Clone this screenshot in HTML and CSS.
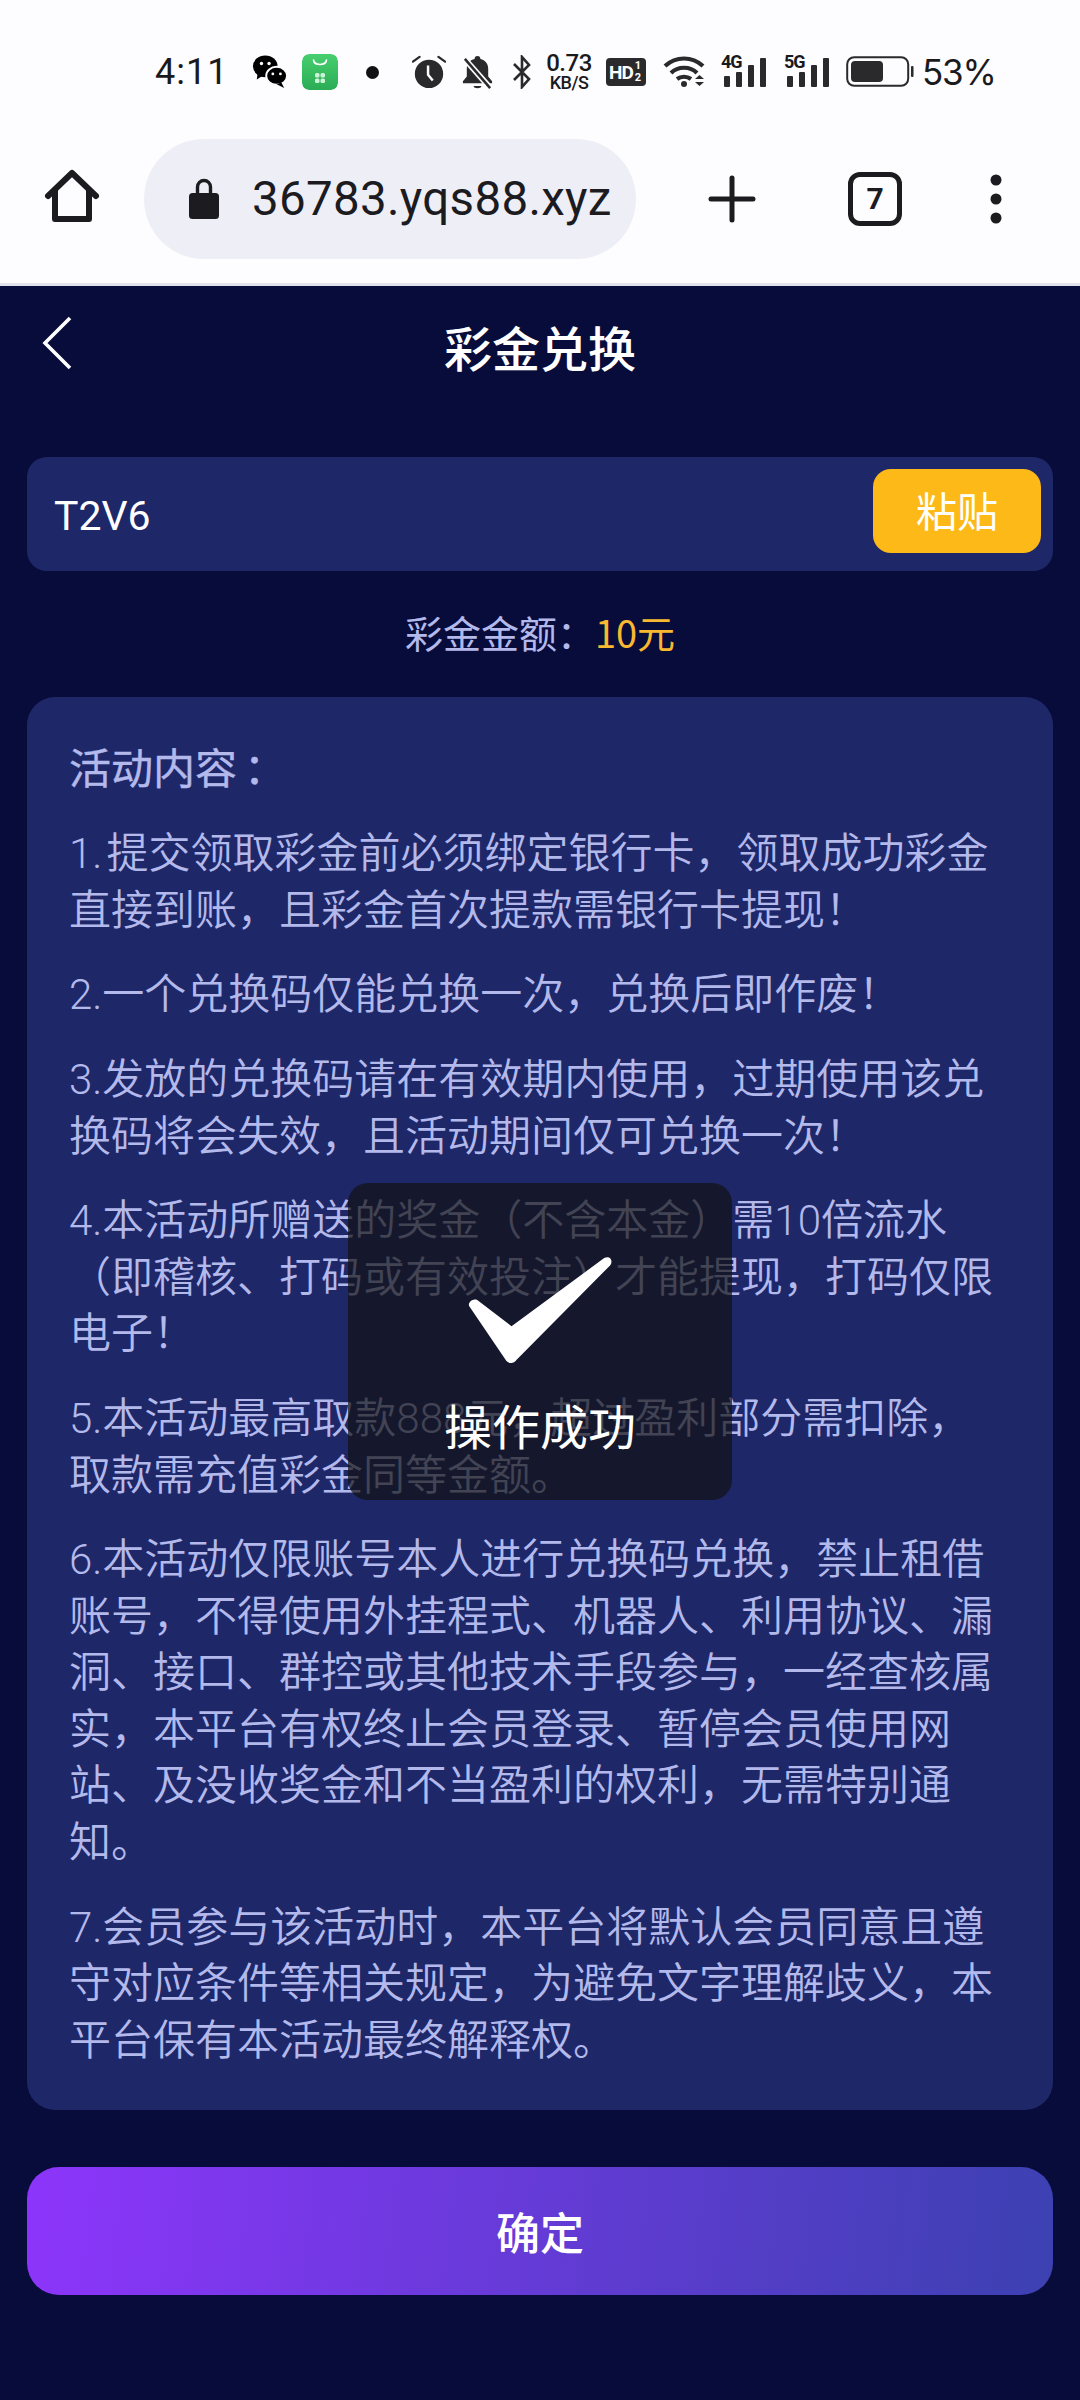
FILE: index.html
```html
<!DOCTYPE html>
<html lang="zh">
<head>
<meta charset="utf-8">
<title>彩金兑换</title>
<link rel="stylesheet" href="styles.css">
</head>
<body>
<div class="phone">
  <div class="status">
    <span class="time">4:11</span>
    <svg class="i-wechat" viewBox="0 0 38 38"><ellipse cx="14" cy="13" rx="13" ry="11.500"/><path d="M6 20l-1 7 8-5z"/><ellipse cx="26" cy="23" rx="11" ry="9.500" stroke="#fdfcff" stroke-width="2"/><path d="M31 30l3 6-8-4z"/><circle cx="10" cy="10" r="1.800" fill="#fdfcff"/><circle cx="18" cy="10" r="1.800" fill="#fdfcff"/><circle cx="22" cy="21" r="1.500" fill="#fdfcff"/><circle cx="30" cy="21" r="1.500" fill="#fdfcff"/></svg>
    <svg class="i-store" viewBox="0 0 36 36"><defs><linearGradient id="g" x1="0" y1="0" x2="0" y2="1"><stop offset="0" stop-color="#47cf6f"/><stop offset="1" stop-color="#2bac55"/></linearGradient></defs><rect width="36" height="36" rx="7" fill="url(#g)"/><path d="M11.500 6c1 6 12 6 13 0" fill="none" stroke="#fff" stroke-width="1.600" stroke-linecap="round"/><g fill="#cdf3d9"><rect x="13" y="19" width="4.500" height="4.500" rx="1.500"/><rect x="18.500" y="19" width="4.500" height="4.500" rx="1.500"/><rect x="13" y="24.500" width="4.500" height="4.500" rx="1.500"/><rect x="18.500" y="24.500" width="4.500" height="4.500" rx="1.500"/></g></svg>
    <span class="dot"></span>
    <svg class="i-alarm" viewBox="0 0 36 36"><circle cx="18" cy="20" r="15" fill="#2a2a2c"/><path d="M1 7l7-5M35 7l-7-5" stroke="#2a2a2c" stroke-width="2.400" stroke-linecap="round"/><path d="M17 11v10l5 6" fill="none" stroke="#fff" stroke-width="2.600"/></svg>
    <svg class="i-bell" viewBox="0 0 32 36"><path d="M16 1c2 0 3 1 3 3 5 1 8 5 8 10v8l4 5v2H1v-2l4-5v-8c0-5 3-9 8-10 0-2 1-3 3-3z" fill="#2a2a2c"/><path d="M12 32h8c0 3-8 3-8 0z" fill="#2a2a2c"/><path d="M1 2l29 33" stroke="#fdfcff" stroke-width="6"/><path d="M3 4l26 30" stroke="#2a2a2c" stroke-width="2.600"/></svg>
    <svg class="i-bt" viewBox="0 0 20 34"><path d="M2 9l15 15-7 8V2l7 8L2 25" fill="none" stroke="#2a2a2c" stroke-width="2.600"/></svg>
    <span class="speed"><b>0.73</b><i>KB/S</i></span>
    <span class="hd"><span class="hd-main">HD</span><span class="hd-frac"><span>1</span><span>2</span></span></span>
    <svg class="i-wifi" viewBox="0 0 44 32"><g fill="none" stroke="#2a2a2c" stroke-width="4.200"><path d="M2 10c11-10 27-10 38 0"/><path d="M8 17c7-7 19-7 26 0"/><path d="M14 23c4-3 10-3 14 0"/></g><circle cx="21" cy="28" r="3" fill="#2a2a2c"/><path d="M32 23l4.500-4 4.500 4zM32 26h9l-4.500 4z" fill="#2a2a2c"/></svg>
    <span class="sig sig-a"><span class="sig-t">4G</span><svg viewBox="0 0 46 30"><g fill="#2a2a2c"><rect x="3" y="18" width="6" height="11" rx="1"/><rect x="15" y="14" width="6" height="15" rx="1"/><rect x="27" y="7" width="6" height="22" rx="1"/><rect x="39" y="0" width="6" height="29" rx="1"/></g></svg></span>
    <span class="sig sig-b"><span class="sig-t">5G</span><svg viewBox="0 0 46 30"><g fill="#2a2a2c"><rect x="3" y="18" width="6" height="11" rx="1"/><rect x="15" y="14" width="6" height="15" rx="1"/><rect x="27" y="7" width="6" height="22" rx="1"/><rect x="39" y="0" width="6" height="29" rx="1"/></g></svg></span>
    <svg class="i-batt" viewBox="0 0 68 32"><rect x="1.200" y="1.200" width="61" height="28.600" rx="7" fill="none" stroke="#2a2a2c" stroke-width="2"/><rect x="5" y="5" width="32" height="21" rx="4" fill="#2a2a2c"/><rect x="65" y="10" width="2.500" height="11" rx="1" fill="#2a2a2c"/></svg>
    <span class="pct">53%</span>
  </div>

  <div class="toolbar">
    <svg class="i-home" viewBox="0 0 56 56"><path d="M4 27L28 4l24 23M11 21v29h34V21" fill="none" stroke="#1c1b1f" stroke-width="6" stroke-linecap="round" stroke-linejoin="round"/></svg>
    <div class="url">
      <svg class="i-lock" viewBox="0 0 32 42"><path d="M9.500 16V9a6.500 6.500 0 0 1 13 0v7" fill="none" stroke="#1c1b1f" stroke-width="3.400"/><rect x="1" y="15" width="30" height="26" rx="3.500" fill="#1c1b1f"/></svg>
      <span class="url-text">36783.yqs88.xyz</span>
    </div>
    <svg class="i-plus" viewBox="0 0 48 48"><path d="M24 3v42M3 24h42" stroke="#1c1b1f" stroke-width="5" stroke-linecap="round"/></svg>
    <span class="tabs">7</span>
    <svg class="i-more" viewBox="0 0 12 50"><circle cx="6" cy="6" r="5.500" fill="#1c1b1f"/><circle cx="6" cy="25" r="5.500" fill="#1c1b1f"/><circle cx="6" cy="44" r="5.500" fill="#1c1b1f"/></svg>
  </div>

  <main class="page">
    <header class="head">
      <svg class="i-back" viewBox="0 0 32 54"><path d="M29 2L4 27l25 25" fill="none" stroke="#fff" stroke-width="3.600"/></svg>
      <h1>彩金兑换</h1>
    </header>
    <div class="code-row">
      <span class="code">T2V6</span>
      <span class="paste">粘贴</span>
    </div>
    <p class="amount">彩金金额：<span class="gold">10元</span></p>
    <section class="rules">
      <h2>活动内容<span class="colon">：</span></h2>
      <p>1. 提交领取彩金前必须绑定银行卡，领取成功彩金直接到账，且彩金首次提款需银行卡提现！</p>
      <p>2.一个兑换码仅能兑换一次，兑换后即作废！</p>
      <p>3.发放的兑换码请在有效期内使用，过期使用该兑换码将会失效，且活动期间仅可兑换一次！</p>
      <p>4.本活动所赠送的奖金（不含本金）需10倍流水（即稽核、打码或有效投注）才能提现，打码仅限电子！</p>
      <p>5.本活动最高取款888元，超过盈利部分需扣除，取款需充值彩金同等金额。</p>
      <p>6.本活动仅限账号本人进行兑换码兑换，禁止租借账号，不得使用外挂程式、机器人、利用协议、漏洞、接口、群控或其他技术手段参与，一经查核属实，本平台有权终止会员登录、暂停会员使用网站、及没收奖金和不当盈利的权利，无需特别通知。</p>
      <p>7.会员参与该活动时，本平台将默认会员同意且遵守对应条件等相关规定，为避免文字理解歧义，本平台保有本活动最终解释权。</p>
    </section>
    <div class="confirm">确定</div>
  </main>

  <div class="toast">
    <svg class="i-check" viewBox="0 0 150 110"><path d="M8 51c-3-3 2-9 7-7l34 26L140 3c6-3 9 3 6 7L54 103c-3 4-7 4-10 1z" fill="#fff"/></svg>
    <span class="toast-text">操作成功</span>
  </div>
</div>
</body>
</html>
```
FILE: styles.css
```css
* { box-sizing: border-box; }
html, body { margin: 0; padding: 0; }
body { font-family: "Noto Sans CJK SC", "Noto Sans", sans-serif; background: #080c3a; }
.phone { position: relative; width: 1080px; height: 2400px; overflow: hidden; display: flex; flex-direction: column; }

/* status bar */
.status { height: 118px; background: #fdfcff; display: flex; align-items: center; padding: 26px 0 0 155px; color: #1a1a1c; }
.time { font: 36px/1 Roboto, sans-serif; letter-spacing: 1px; width: 73px; }
.i-wechat { width: 36px; height: 36px; margin-left: 24px; }
.i-store { width: 36px; height: 36px; margin-left: 14px; border-radius: 7px; }
.dot { width: 13px; height: 13px; border-radius: 50%; background: #111; margin-left: 28px; }
.i-alarm { width: 34px; height: 36px; margin-left: 33px; }
.i-bell { width: 33px; height: 35px; margin-left: 15px; }
.i-bt { width: 22px; height: 34px; margin-left: 17px; }
.speed { width: 50px; margin-left: 11px; display: flex; flex-direction: column; align-items: center; }
.speed b { font: 500 24px/21px Roboto, sans-serif; letter-spacing: -.5px; }
.speed i { font: 500 18px/17px Roboto, sans-serif; letter-spacing: -.5px; }
.hd { width: 40px; height: 28px; margin-left: 12px; background: #2a2a2c; border-radius: 4px; color: #fff; display: flex; align-items: center; padding-left: 3px; }
.hd-main { font: 700 19px/1 "Roboto", sans-serif; letter-spacing: -1px; }
.hd-frac { display: flex; flex-direction: column; font: 700 11px/12px Roboto, sans-serif; margin-left: 2px; }
.i-wifi { width: 44px; height: 32px; margin-left: 17px; }
.sig { position: relative; display: block; width: 46px; height: 32px; }
.sig svg { position: absolute; left: 0; bottom: 0; width: 46px; height: 30px; }
.sig-t { position: absolute; left: 0; top: -3px; font: 700 18px/1 Roboto, sans-serif; letter-spacing: -1px; background: #fdfcff; }
.sig-a { margin-left: 14px; }
.sig-b { margin-left: 17px; }
.i-batt { width: 68px; height: 32px; margin-left: 16px; }
.pct { font: 35px/1 Inter, Roboto, sans-serif; margin-left: 8px; letter-spacing: -1.200px; }

/* toolbar */
.toolbar { height: 168px; background: #fdfcff; border-bottom: 3px solid #e3e2ec; display: flex; align-items: flex-start; padding-top: 21px; position: relative; }
.i-home { width: 56px; height: 56px; margin: 30px 0 0 44px; }
.url { width: 492px; height: 120px; margin-left: 44px; border-radius: 60px; background: #eeeff6; display: flex; align-items: center; padding-left: 44px; }
.i-lock { width: 32px; height: 42px; flex: none; }
.url-text { font: 47.500px/1 Roboto, sans-serif; color: #1c1b1f; margin-left: 32px; padding-top: 2px; letter-spacing: .3px; white-space: nowrap; }
.i-plus { width: 48px; height: 48px; margin: 36px 0 0 72px; }
.tabs { width: 54px; height: 54px; margin: 33px 0 0 92px; border: 5px solid #1c1b1f; border-radius: 12px; font: 700 30px/44px Roboto, sans-serif; text-align: center; color: #1c1b1f; }
.i-more { width: 12px; height: 50px; margin: 35px 0 0 88px; }

/* page */
.page { flex: 1; padding: 0 27px; background: #080c3a; display: flex; flex-direction: column; }
.head { height: 171px; position: relative; padding-top: 27px; }
.i-back { position: absolute; left: 14px; top: 30px; width: 32px; height: 54px; }
h1 { margin: 0; font-size: 48px; line-height: 66px; font-weight: 500; color: #fff; text-align: center; }
.code-row { height: 114px; border-radius: 20px; background: #1e2869; display: flex; align-items: center; justify-content: space-between; padding: 0 12px 6px 27px; }
.code { font: 41px/1 Roboto, sans-serif; color: #fff; position: relative; top: 5px; }
.paste { width: 168px; height: 84px; border-radius: 18px; background: #fdb918; color: #fff; font-size: 41px; line-height: 80px; text-align: center; }
.amount { margin: 0; height: 126px; font-size: 38px; line-height: 122px; text-align: center; color: #b4b9ec; }
.gold { color: #f8b830; }
.rules { height: 1413px; border-radius: 28px; background: #1e2869; padding: 41px 50px 0 42px; color: #b4b9ec; }
h2 { margin: 0 0 32px; font-size: 42px; line-height: 56px; font-weight: 400; -webkit-text-stroke: .4px #b4b9ec; }
.colon { margin-left: 7px; }
.rules p { margin: 0 0 28.250px; font-family: Roboto, "Noto Sans CJK SC", sans-serif; font-size: 42px; line-height: 56.500px; font-weight: 350; word-spacing: -6px; }
.confirm { margin-top: 57px; height: 128px; border-radius: 32px; background: linear-gradient(97deg, #8d35fb 0%, #3c41b1 100%); color: #fff; font-size: 44px; font-weight: 500; line-height: 128px; text-align: center; }

/* toast */
.toast { position: absolute; left: 348px; top: 1183px; width: 384px; height: 317px; border-radius: 20px; background: rgba(17, 17, 19, .7); display: flex; flex-direction: column; align-items: center; }
.i-check { width: 158px; height: 112px; margin: 72px 4px 0 0; }
.toast-text { margin-top: 25px; font-size: 48px; line-height: 64px; color: #fff; }
```
